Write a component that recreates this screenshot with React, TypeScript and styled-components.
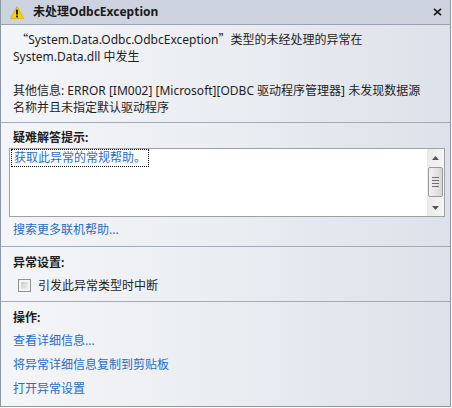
import React from "react";
import styled, { createGlobalStyle } from "styled-components";

const Global = createGlobalStyle`
  html, body { margin: 0; padding: 0; background: #ffffff; }
  body { font-family: "Noto Sans", "Noto Sans CJK SC", sans-serif; font-size: 12px; color: #1e1e1e; }
  * { box-sizing: border-box; }
`;

const Window = styled.div`
  width: 451px;
  height: 407px;
  border: 1px solid #8d96a3;
  border-top: none;
  display: flex;
  flex-direction: column;
  background: linear-gradient(90deg, #f4f5f8 0%, #e9ecf1 55%, #dde1e9 100%);
  overflow: hidden;
`;

const TitleBar = styled.div`
  height: 25px;
  flex: none;
  display: flex;
  align-items: center;
  padding-left: 9px;
  padding-right: 7px;
  background: #ccd3df;
  border-bottom: 1px solid #9aa3b0;
`;

const TitleText = styled.div`
  margin-left: 9px;
  font-weight: bold;
  font-size: 12px;
  color: #1a1a1a;
  flex: 1;
  line-height: 16px;
`;

const CloseBtn = styled.div`
  width: 12px;
  height: 12px;
  display: flex;
  align-items: center;
  justify-content: center;
`;

const Section = styled.div<{ $pt: number; $pb: number; $divider?: boolean }>`
  padding: ${(p) => p.$pt}px 11px ${(p) => p.$pb}px 12px;
  border-top: ${(p) => (p.$divider ? "1px solid #a3abb7" : "none")};
  display: flex;
  flex-direction: column;
`;

const Para = styled.div`
  line-height: 17px;
  white-space: pre-wrap;
`;

const CjkQuote = styled.span`
  font-family: "Noto Sans CJK SC", sans-serif;
  line-height: 0;
`;

const Header = styled.div`
  font-weight: bold;
  line-height: 17px;
`;

const LinkText = styled.div<{ $mt?: number }>`
  color: #1f6ec7;
  line-height: 17px;
  margin-top: ${(p) => p.$mt ?? 0}px;
  cursor: pointer;
`;

const TextBox = styled.div`
  margin: 2px 0 0 -4px;
  width: 436px;
  height: 69px;
  border: 1px solid #a0a0a0;
  background: #ffffff;
  display: flex;
`;

const TextArea = styled.div`
  flex: 1;
  padding: 0 0 0 1px;
`;

const FocusLink = styled.span`
  display: inline-block;
  border: 1px dotted #000;
  padding: 0 2px 0 2px;
  color: #1f6ec7;
  line-height: 16px;
`;

const ScrollBar = styled.div`
  width: 17px;
  display: flex;
  flex-direction: column;
  align-items: center;
  background: linear-gradient(90deg, #eaeaea, #f6f6f6);
`;

const ArrowBtn = styled.div`
  height: 17px;
  width: 17px;
  display: flex;
  align-items: center;
  justify-content: center;
`;

const Track = styled.div`
  flex: 1;
  display: flex;
  flex-direction: column;
  align-items: center;
`;

const Thumb = styled.div`
  margin-top: 1px;
  width: 15px;
  height: 30px;
  border: 1px solid #9a9a9a;
  border-radius: 2px;
  background: linear-gradient(90deg, #f2f2f2, #e2e2e2 60%, #d6d6d6);
  display: flex;
  flex-direction: column;
  align-items: center;
  justify-content: center;
  gap: 2px;
`;

const Grip = styled.div`
  width: 7px;
  height: 1px;
  background: #6f6f6f;
`;

const CheckRow = styled.div`
  display: flex;
  align-items: center;
  margin-top: 6px;
  padding-left: 5px;
  line-height: 17px;
`;

const CheckBox = styled.div`
  width: 13px;
  height: 13px;
  border: 1px solid #8e8f8f;
  background: #f4f4f4;
  padding: 2px;
  margin-right: 7px;
`;

const CheckInner = styled.div`
  width: 100%;
  height: 100%;
  background: linear-gradient(135deg, #cbcbcb, #f0f0f0);
`;

const LinkList = styled.div`
  display: flex;
  flex-direction: column;
  gap: 7px;
  margin-top: 6px;
`;

export default function App() {
  return (
    <>
      <Global />
      <Window>
        <TitleBar>
          <svg width="14" height="13" viewBox="0 0 14 13">
            <path d="M7 0.5 L13.6 12.4 L0.4 12.4 Z" fill="#f7d400" stroke="#c9a000" strokeWidth="0.6" strokeLinejoin="round" />
            <rect x="6.1" y="3.6" width="1.8" height="5" fill="#111" />
            <rect x="6.1" y="9.6" width="1.8" height="1.8" fill="#111" />
          </svg>
          <TitleText>未处理OdbcException</TitleText>
          <CloseBtn>
            <svg width="9" height="8" viewBox="0 0 9 8">
              <path d="M1 0.8 L8 7.2 M8 0.8 L1 7.2" stroke="#1a1a1a" strokeWidth="1.6" />
            </svg>
          </CloseBtn>
        </TitleBar>
        <Section $pt={6} $pb={6}>
          <Para>
            {" "}
            <CjkQuote>“</CjkQuote>System.Data.Odbc.OdbcException<CjkQuote>”</CjkQuote>
            {"类型的未经处理的异常在\nSystem.Data.dll 中发生"}
          </Para>
          <Para>{" "}</Para>
          <Para>{"其他信息: ERROR [IM002] [Microsoft][ODBC 驱动程序管理器] 未发现数据源\n名称并且未指定默认驱动程序"}</Para>
        </Section>
        <Section $divider $pt={6} $pb={8}>
          <Header>疑难解答提示:</Header>
          <TextBox>
            <TextArea>
              <FocusLink>获取此异常的常规帮助。</FocusLink>
            </TextArea>
            <ScrollBar>
              <ArrowBtn>
                <svg width="7" height="4" viewBox="0 0 7 4">
                  <path d="M0 4 L3.5 0 L7 4 Z" fill="#555" />
                </svg>
              </ArrowBtn>
              <Track>
                <Thumb>
                  <Grip />
                  <Grip />
                  <Grip />
                  <Grip />
                </Thumb>
              </Track>
              <ArrowBtn>
                <svg width="7" height="4" viewBox="0 0 7 4">
                  <path d="M0 0 L7 0 L3.5 4 Z" fill="#555" />
                </svg>
              </ArrowBtn>
            </ScrollBar>
          </TextBox>
          <LinkText $mt={4}>搜索更多联机帮助...</LinkText>
        </Section>
        <Section $divider $pt={7} $pb={7}>
          <Header>异常设置:</Header>
          <CheckRow>
            <CheckBox>
              <CheckInner />
            </CheckBox>
            引发此异常类型时中断
          </CheckRow>
        </Section>
        <Section $divider $pt={7} $pb={0}>
          <Header>操作:</Header>
          <LinkList>
            <LinkText>查看详细信息...</LinkText>
            <LinkText>将异常详细信息复制到剪贴板</LinkText>
            <LinkText>打开异常设置</LinkText>
          </LinkList>
        </Section>
      </Window>
    </>
  );
}
